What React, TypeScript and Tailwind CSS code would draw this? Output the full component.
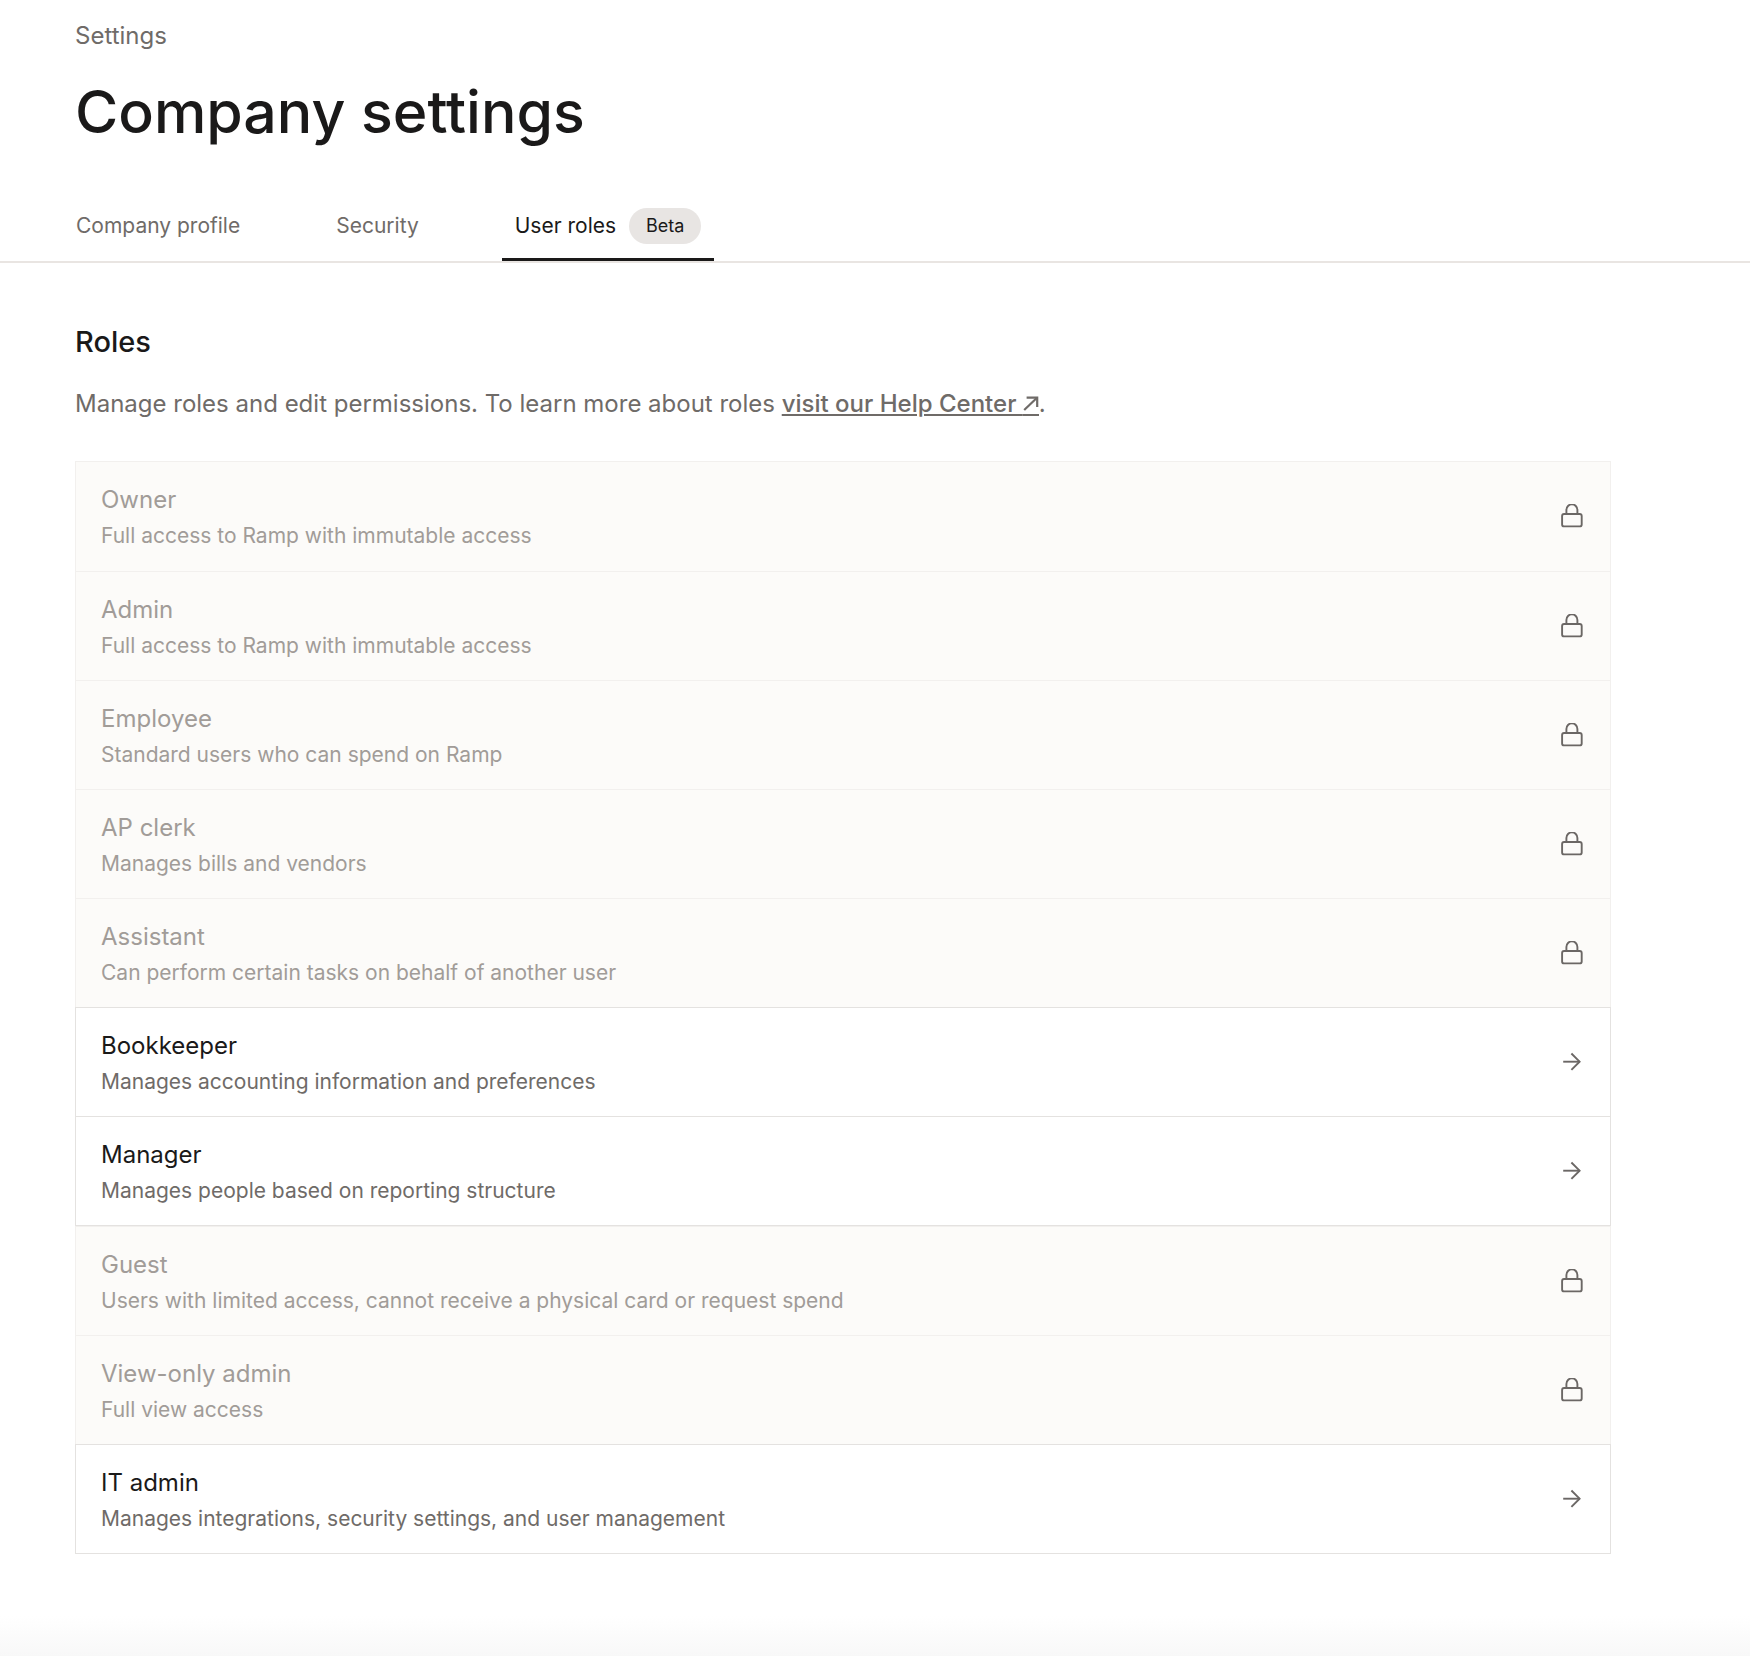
import React from "react";

type Role = { name: string; description: string; editable?: boolean };

const roles: Role[] = [
  { name: "Owner", description: "Full access to Ramp with immutable access" },
  { name: "Admin", description: "Full access to Ramp with immutable access" },
  { name: "Employee", description: "Standard users who can spend on Ramp" },
  { name: "AP clerk", description: "Manages bills and vendors" },
  { name: "Assistant", description: "Can perform certain tasks on behalf of another user" },
  { name: "Bookkeeper", description: "Manages accounting information and preferences", editable: true },
  { name: "Manager", description: "Manages people based on reporting structure", editable: true },
  { name: "Guest", description: "Users with limited access, cannot receive a physical card or request spend" },
  { name: "View-only admin", description: "Full view access" },
  { name: "IT admin", description: "Manages integrations, security settings, and user management", editable: true },
];

function LockIcon() {
  return (
    <svg aria-hidden="true" viewBox="0 0 24 26" className="h-[26px] w-6 shrink-0 text-[#6b6765]" fill="none" stroke="currentColor" strokeWidth="1.9">
      <rect x="2.1" y="10" width="19.6" height="12.4" rx="2" />
      <path d="M6.4 10V5.9a5.5 5.5 0 0 1 11 0V10" />
    </svg>
  );
}

function ArrowIcon() {
  return (
    <svg aria-hidden="true" viewBox="0 0 24 26" className="h-[26px] w-6 shrink-0 text-[#6b6765]" fill="none" stroke="currentColor" strokeWidth="1.9">
      <path d="M3.2 11.7H20" />
      <path d="M11.4 3.5l8.2 8.2-8.2 8.2" />
    </svg>
  );
}

function ExternalIcon() {
  return (
    <svg aria-hidden="true" viewBox="0 0 16 20" className="inline-block h-5 w-4 align-[-4px]" fill="none" stroke="currentColor" strokeWidth="2.2">
      <path d="M1.2 14L14 1.8" />
      <path d="M3.6 1.6H14.2V11" />
      <path d="M0 19H16" strokeWidth="2" />
    </svg>
  );
}

function RoleRow({ role, closesGroup }: { role: Role; closesGroup: boolean }) {
  const tone = role.editable ? "border-[#e4e2e0] bg-white" : "border-[#f2f0ee] bg-[#fcfbf9]";
  return (
    <li className={`border-x border-t first:pb-px ${tone} ${closesGroup ? "border-b" : ""}`}>
      <button type="button" disabled={!role.editable} className="flex w-full items-center justify-between pt-[22px] pr-[26px] pb-5 pl-[25px] text-left">
        <span className="flex flex-col gap-[6px]">
          <span className={`text-[24px] leading-8 ${role.editable ? "text-[#1a1919]" : "text-[#a19c98]"}`}>{role.name}</span>
          <span className={`text-[21px] leading-7 ${role.editable ? "text-[#6f6b68]" : "text-[#a19c98]"}`}>{role.description}</span>
        </span>
        {role.editable ? <ArrowIcon /> : <LockIcon />}
      </button>
    </li>
  );
}

export default function App() {
  return (
    <div className="flex min-h-screen flex-col bg-white font-[Inter,sans-serif] text-[#1a1919]">
      <header className="border-b-2 border-[#e9e5e2] pt-5">
        <div className="pl-[75px]">
          <p className="text-[24px] leading-8 text-[#6f6b68]">Settings</p>
          <h1 className="mt-6 text-[59px] leading-[72px] font-medium">Company settings</h1>
        </div>
        <nav role="tablist" aria-label="Company settings" className="mt-[60px] flex gap-[70px] pl-[63px]">
          <button type="button" role="tab" aria-selected="false" className="border-b-3 border-transparent px-[13px] pb-[14px] text-[21px] leading-7 text-[#6f6b68]">
            Company profile
          </button>
          <button type="button" role="tab" aria-selected="false" className="border-b-3 border-transparent px-[13px] pb-[14px] text-[21px] leading-7 text-[#6f6b68]">
            Security
          </button>
          <button type="button" role="tab" aria-selected="true" className="flex items-center gap-[13px] border-b-3 border-[#1a1919] px-[13px] pb-[14px] text-[21px] leading-7">
            User roles
            <span className="rounded-full bg-[#e8e5e3] px-[17px] py-1 text-[18px] leading-7">Beta</span>
          </button>
        </nav>
      </header>

      <main className="pt-[59px] pr-[139px] pl-[75px]">
        <h2 className="text-[29px] leading-10 font-medium">Roles</h2>
        <p className="mt-[26px] text-[24px] leading-8 text-[#6f6b68]">
          Manage roles and edit permissions. To learn more about roles{" "}
          <a href="#help" className="font-medium underline decoration-2 underline-offset-2">
            visit our Help Center <ExternalIcon />
          </a>
          .
        </p>
        <ul className="mt-[41px]">
          {roles.map((role, i) => (
            <RoleRow key={role.name} role={role} closesGroup={i === roles.length - 1 || (!!role.editable && !roles[i + 1].editable)} />
          ))}
        </ul>
      </main>

      <div className="mt-auto h-10 bg-linear-to-b from-white to-[#f8f8f8]" />
    </div>
  );
}
